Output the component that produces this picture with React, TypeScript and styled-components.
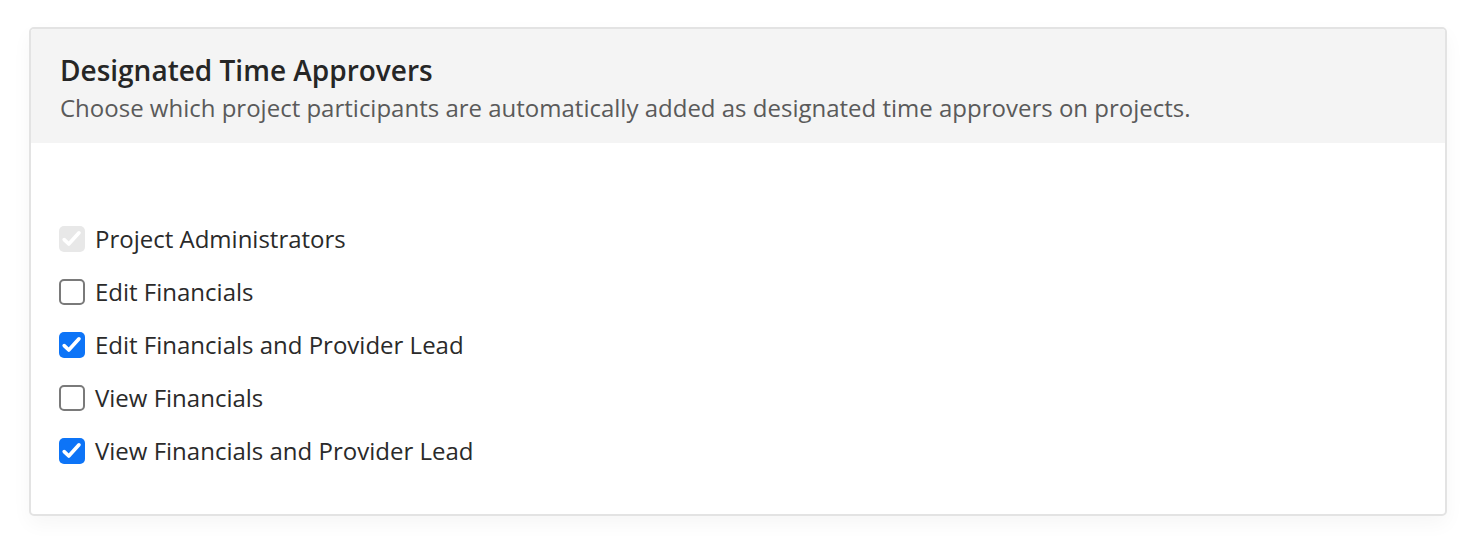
import React, { useState } from "react";
import styled, { createGlobalStyle } from "styled-components";

const GlobalStyle = createGlobalStyle`
  body {
    margin: 0;
    background: #ffffff;
    font-family: "Open Sans", "Noto Sans", sans-serif;
  }
`;

type Option = {
  label: string;
  checked: boolean;
  disabled?: boolean;
};

const initialOptions: Option[] = [
  { label: "Project Administrators", checked: true, disabled: true },
  { label: "Edit Financials", checked: false },
  { label: "Edit Financials and Provider Lead", checked: true },
  { label: "View Financials", checked: false },
  { label: "View Financials and Provider Lead", checked: true },
];

function App() {
  const [options, setOptions] = useState(initialOptions);

  function toggle(index: number) {
    setOptions((prev) =>
      prev.map((o, i) =>
        i === index && !o.disabled ? { ...o, checked: !o.checked } : o
      )
    );
  }

  return (
    <Page>
      <GlobalStyle />
      <Card>
        <Header>
          <Title>Designated Time Approvers</Title>
          <Subtitle>
            Choose which project participants are automatically added as
            designated time approvers on projects.
          </Subtitle>
        </Header>
        <Body>
          {options.map((o, i) => (
            <Row key={o.label} onClick={() => toggle(i)}>
              <Box $checked={o.checked} $disabled={o.disabled}>
                {o.checked && (
                  <svg width="26" height="26" viewBox="0 0 26 26">
                    <path
                      d="M5.2 13.6 L9.8 18 L20 6.8"
                      fill="none"
                      stroke="#ffffff"
                      strokeWidth="3.6"
                      strokeLinecap="round"
                      strokeLinejoin="round"
                    />
                  </svg>
                )}
              </Box>
              <Label>{o.label}</Label>
            </Row>
          ))}
        </Body>
      </Card>
    </Page>
  );
}

const Page = styled.div`
  padding: 27px 28px 20px 29px;
`;

const Card = styled.div`
  border: 2px solid #e3e3e3;
  border-radius: 5px;
  background: #ffffff;
  box-shadow: 0 8px 20px rgba(0, 0, 0, 0.04);
  overflow: hidden;
`;

const Header = styled.div`
  background: #f4f4f4;
  padding: 23px 29px 19px;
  display: flex;
  flex-direction: column;
  gap: 4px;
`;

const Title = styled.h2`
  margin: 0;
  font-size: 28px;
  line-height: 36px;
  font-weight: 600;
  color: #262626;
`;

const Subtitle = styled.p`
  margin: 0;
  font-size: 24px;
  line-height: 32px;
  font-weight: 400;
  color: #5a5a5a;
`;

const Body = styled.div`
  padding: 69px 28px 37px;
  display: flex;
  flex-direction: column;
`;

const Row = styled.label`
  height: 53px;
  display: flex;
  align-items: center;
  gap: 10px;
  cursor: pointer;
`;

const Box = styled.span<{ $checked: boolean; $disabled?: boolean }>`
  width: 26px;
  height: 26px;
  box-sizing: border-box;
  border-radius: 5px;
  display: flex;
  align-items: center;
  justify-content: center;
  flex-shrink: 0;
  overflow: hidden;
  background: ${(p) =>
    p.$disabled ? "#e8e8e8" : p.$checked ? "#0d74f7" : "#ffffff"};
  border: ${(p) =>
    p.$disabled || p.$checked ? "none" : "2px solid #7a7a7a"};
`;

const Label = styled.span`
  font-size: 24px;
  line-height: 32px;
  color: #2a2a2a;
`;

export default App;
